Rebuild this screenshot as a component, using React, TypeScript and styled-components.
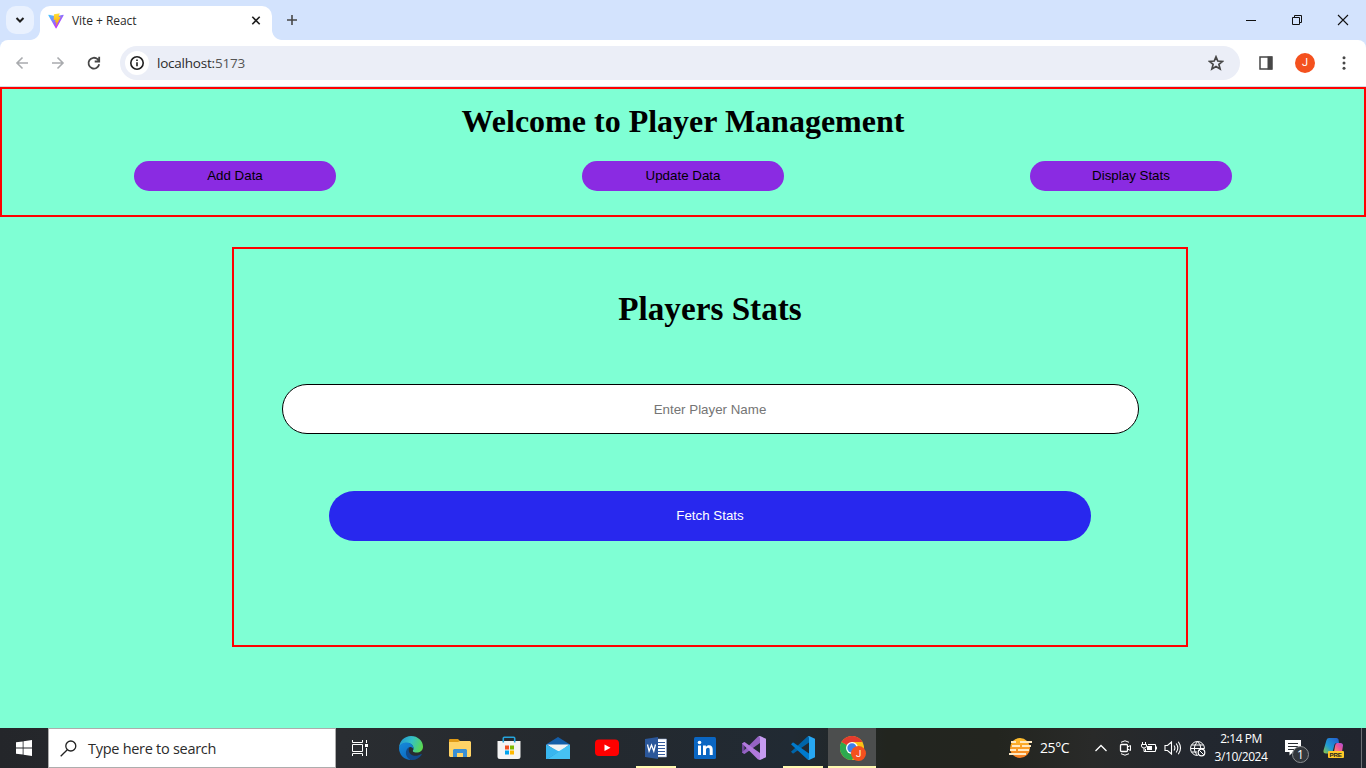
import React from "react";
import styled, { createGlobalStyle } from "styled-components";

const ui = `"Open Sans", "Noto Sans", sans-serif`;

const GlobalStyle = createGlobalStyle`
  *, *::before, *::after { box-sizing: border-box; }
  body { margin: 0; overflow: hidden; }
  svg { display: block; flex: none; }
`;

const Screen = styled.div`
  width: 1366px;
  height: 768px;
  display: flex;
  flex-direction: column;
  overflow: hidden;
  background: #7fffd4;
`;

/* ---------- browser ---------- */

const TabStrip = styled.header`
  height: 40px;
  display: flex;
  align-items: flex-start;
  padding: 6px 0 0 6px;
  background: #d3e3fd;
`;

const TabSearch = styled.button`
  width: 28px;
  height: 28px;
  padding: 6px;
  border: 0;
  border-radius: 10px;
  background: #e9f1fe;
`;

const Tab = styled.div`
  position: relative;
  width: 232px;
  height: 34px;
  margin-left: 6px;
  padding: 0 10px 5px 8px;
  display: flex;
  align-items: center;
  border-radius: 10px 10px 0 0;
  background: #fff;
  &::before, &::after {
    content: "";
    position: absolute;
    bottom: 0;
    width: 10px;
    height: 10px;
  }
  &::before { left: -10px; background: radial-gradient(circle at 0 0, transparent 9.5px, #fff 10.3px); }
  &::after { right: -10px; background: radial-gradient(circle at 100% 0, transparent 9.5px, #fff 10.3px); }
`;

const TabTitle = styled.span`
  flex: 1;
  margin-left: 8px;
  font: 12px/16px ${ui};
  letter-spacing: -0.05px;
  color: #2b2b2b;
`;

const NewTab = styled.div`
  margin: 6px 0 0 12px;
`;

const WindowControls = styled.div`
  display: flex;
  gap: 30px;
  margin: 6px 15px 0 auto;
`;

const ToolbarWrap = styled.div`
  background: #d3e3fd;
`;

const Toolbar = styled.nav`
  height: 47px;
  display: flex;
  align-items: center;
  padding: 0 14px;
  border-radius: 8px 8px 0 0;
  border-bottom: 1px solid #d5dbe3;
  background: #fff;
`;

const NavButtons = styled.div`
  display: flex;
  gap: 20px;
  width: 106px;
`;

const AddressBar = styled.div`
  flex: 1;
  height: 34px;
  display: flex;
  align-items: center;
  padding: 0 16px 0 5px;
  border-radius: 17px;
  background: #ebeef7;
`;

const SiteInfo = styled.span`
  width: 24px;
  height: 24px;
  padding: 4px;
  border-radius: 50%;
  background: #fff;
`;

const Url = styled.span`
  flex: 1;
  margin-left: 8px;
  font: 13.5px/20px ${ui};
  letter-spacing: -0.22px;
  color: #2b2b2b;
  span { color: #555; }
`;

const ToolbarActions = styled.div`
  display: flex;
  align-items: center;
  width: 112px;
  padding-left: 18px;
`;

const Avatar = styled.span`
  width: 20px;
  height: 20px;
  margin: 0 21px 0 21px;
  border-radius: 50%;
  background: #f4511e;
  color: #fff;
  text-align: center;
  font: 11px/20px Roboto, sans-serif;
`;

/* ---------- page ---------- */

const Page = styled.main`
  height: 641px;
  display: flex;
  flex-direction: column;
`;

const PageHeader = styled.section`
  height: 130px;
  border: 2px solid #f00;
  padding-top: 14px;
`;

const Heading = styled.h1<{ $size: number }>`
  margin: 0;
  text-align: center;
  color: #000;
  font: bold ${(p) => p.$size}px/37px "Liberation Serif", serif;
`;

const Menu = styled.div`
  display: flex;
  justify-content: space-between;
  margin: 21px 132px 0;
`;

const MenuButton = styled.button`
  width: 202px;
  height: 30px;
  padding: 0 0 2px;
  border: 0;
  border-radius: 15px;
  background: #8a2be2;
  color: #000;
  font: 13.333px "Liberation Sans", sans-serif;
`;

const StatsPanel = styled.section`
  width: 956px;
  height: 400px;
  margin: 30px 0 0 232px;
  padding-top: 41px;
  display: flex;
  flex-direction: column;
  align-items: center;
  border: 2px solid #f00;
`;

const PlayerInput = styled.input`
  width: 857px;
  height: 50px;
  margin-top: 57px;
  padding: 0;
  border: 1px solid #000;
  border-radius: 25px;
  background: #fff;
  text-align: center;
  font: 13.333px "Liberation Sans", sans-serif;
  &::placeholder { color: #757575; }
`;

const FetchButton = styled.button`
  width: 762px;
  height: 50px;
  margin-top: 57px;
  padding: 0 0 2px;
  border: 0;
  border-radius: 25px;
  background: #2828ee;
  color: #fff;
  font: 13.333px "Liberation Sans", sans-serif;
`;

/* ---------- taskbar ---------- */

const Taskbar = styled.footer`
  height: 40px;
  display: flex;
  color: #fff;
  background: linear-gradient(90deg, #24262a 0, #2a2d31 25%, #24292e 42%, #212a33 58%, #22251f 65%, #23251f 73%, #292a29 80%, #22272f 88%, #20252e 100%);
`;

const Slot = styled.div<{ $w: number }>`
  width: ${(p) => p.$w}px;
  height: 40px;
  flex: none;
  display: flex;
  align-items: center;
  justify-content: center;
`;

const SearchBox = styled.div`
  width: 288px;
  height: 40px;
  display: flex;
  align-items: center;
  padding-left: 11px;
  border: 1px solid #adadad;
  background: #fff;
`;

const SearchText = styled.span`
  margin-left: 11px;
  padding-top: 1px;
  font: 14.5px/20px ${ui};
  letter-spacing: -0.28px;
  color: #2b2b2b;
`;

const Apps = styled.div`
  display: flex;
  gap: 1px;
  margin-left: 3px;
`;

const AppSlot = styled.div<{ $state?: "open" | "active" }>`
  width: 48px;
  height: 40px;
  display: flex;
  align-items: center;
  justify-content: center;
  background: ${(p) => (p.$state === "active" ? "#4c4e4e" : "transparent")};
  position: relative;
  &::after {
    content: "";
    position: absolute;
    bottom: 0;
    height: 2px;
    left: ${(p) => (p.$state === "active" ? 0 : 4)}px;
    right: ${(p) => (p.$state === "active" ? 0 : 4)}px;
    background: ${(p) => (p.$state ? "#fdf9b0" : "transparent")};
  }
`;

const Tray = styled.div`
  display: flex;
  margin-left: auto;
`;

const Weather = styled.div`
  width: 81px;
  display: flex;
  align-items: center;
  gap: 7px;
  font: 14px/20px ${ui};
  letter-spacing: -0.4px;
`;

const Clock = styled.div`
  width: 64px;
  padding-top: 2px;
  text-align: center;
  white-space: nowrap;
  font: 12px/18px ${ui};
  letter-spacing: -0.45px;
`;

const ShowDesktop = styled.div`
  width: 5px;
  border-left: 1px solid #6d7075;
`;

const ViteLogo = () => (
  <svg width="16" height="16" viewBox="0 0 410 404">
    <defs>
      <linearGradient id="va" x1="6" y1="33" x2="235" y2="344" gradientUnits="userSpaceOnUse">
        <stop stopColor="#41D1FF" /><stop offset="1" stopColor="#BD34FE" />
      </linearGradient>
      <linearGradient id="vb" x1="194" y1="9" x2="236" y2="293" gradientUnits="userSpaceOnUse">
        <stop stopColor="#FFEA83" /><stop offset=".08" stopColor="#FFDD35" /><stop offset="1" stopColor="#FFA800" />
      </linearGradient>
    </defs>
    <path fill="url(#va)" d="M399.6 59.5 215.6 388.5c-3.8 6.8-13.5 6.8-17.4.1L10.6 59.6C6.4 52.2 12.7 43.2 21.1 44.7l184.2 32.9c1.2.2 2.4.2 3.6 0l180.3-32.9c8.4-1.5 14.7 7.4 10.4 14.8Z" />
    <path fill="url(#vb)" d="M293 1.6 156.8 28.3c-2.2.4-3.9 2.3-4 4.5l-8.4 141.5c-.2 3.3 2.9 5.9 6.1 5.2l37.9-8.8c3.5-.8 6.7 2.3 6 5.9l-11.3 55.1c-.8 3.7 2.7 6.9 6.4 5.8l23.4-7.1c3.6-1.1 7.1 2.1 6.4 5.8l-17.9 86.6c-1.1 5.4 6.1 8.4 9.1 3.7l2-3.1L323.4 102c1.9-3.7-1.3-7.9-5.4-7.1l-39 7.5c-3.7.7-6.8-2.7-5.7-6.3l25.4-88.2c1.1-3.6-2-7.1-5.7-6.3Z" />
  </svg>
);

const EdgeLogo = () => (
  <svg width="24" height="24" viewBox="0 0 24 24">
    <defs>
      <linearGradient id="ea" x1="2" y1="3" x2="24" y2="12" gradientUnits="userSpaceOnUse">
        <stop stopColor="#249bd0" /><stop offset=".45" stopColor="#35c1c5" /><stop offset="1" stopColor="#5edb45" />
      </linearGradient>
      <linearGradient id="eb" x1="1" y1="7" x2="12" y2="24" gradientUnits="userSpaceOnUse">
        <stop stopColor="#1689da" /><stop offset="1" stopColor="#0b67bd" />
      </linearGradient>
    </defs>
    <path fill="url(#ea)" d="M0 11.500C.5 5 5.500 0 12 0c7 0 12 5 12 10.600 0 4-3 6-6.300 6-3.500 0-4.700-1.300-3.200-3C15 10 12.500 7 8 7 4 7 1 9 0 11.500Z" />
    <path fill="url(#eb)" d="M0 12C.5 8.500 4 6.300 8 6.500c4.500.2 7 3.500 6.500 7-.6-1.800-2-2.700-4-2.300C7 12.500 6.500 20 12 24 5 24 0 18.500 0 12Z" />
    <path fill="#114a8b" d="M12 24C5.500 21.500 5.500 13.500 10.200 11.200c-1.500 4.300 1 8 5 8.500 2.700.3 5-.5 6.800-1.700.5-.3 1 .2.500.9C20.300 22.200 16.500 24.200 12 24Z" />
  </svg>
);

const ExplorerIcon = () => (
  <svg width="22" height="20" viewBox="0 0 22 20">
    <path fill="#df9a16" d="M1 1h8l2 2h10v4H0V2a1 1 0 0 1 1-1Z" />
    <path fill="#ffd366" d="M0 4h9l2-1h10l1 1v14l-1 1H1l-1-1Z" />
    <path fill="#3a8fd4" d="M5 11h12l1 1v7h-4v-4H8v4H4v-7Z" />
  </svg>
);

const StoreIcon = () => (
  <svg width="24" height="24" viewBox="0 0 24 24">
    <path fill="#f4f4f4" d="M.5 5h23v15.500a2.500 2.500 0 0 1-2.500 2.500H3a2.500 2.500 0 0 1-2.500-2.500Z" />
    <path fill="none" stroke="#25a4dc" strokeWidth="1.600" d="M6.300 6.500V2.300q0-1 1-1h9.400q1 0 1 1v4.200" />
    <path fill="#f25022" d="M8 9.500h4v4H8Z" /><path fill="#7fba00" d="M13 9.500h4v4h-4Z" />
    <path fill="#00a4ef" d="M8 14.500h4v4H8Z" /><path fill="#ffb900" d="M13 14.500h4v4h-4Z" />
  </svg>
);

const MailIcon = () => (
  <svg width="24" height="24" viewBox="0 0 24 24">
    <path fill="#145ea8" d="M12 1 24 8.500v3H0v-3Z" />
    <path fill="#f2f3f4" d="M1 8.500h22L13 17Z" />
    <path fill="#38b6ef" d="M0 8.500 13 15.500 24 23H0Z" />
    <path fill="#55cdf7" d="M24 8.500V23L0 23Z" />
    <path fill="#2da9e6" d="M13 15.200 24 23H0Z" />
    <path fill="#46c2f3" d="M24 8.500V23H2L14 15Z" />
  </svg>
);

const YouTubeIcon = () => (
  <svg width="24" height="18" viewBox="0 0 24 18">
    <rect y=".5" width="24" height="16.500" rx="4" fill="#f00" />
    <path fill="#fff" d="m9.500 5.500 6 3.300-6 3.300Z" />
  </svg>
);

const WordIcon = () => (
  <svg width="24" height="24" viewBox="0 0 24 24">
    <path fill="#fff" stroke="#8ca2cc" strokeWidth=".6" d="M12 3h10.500v18H12Z" />
    <path stroke="#365b9d" strokeWidth="1" d="M14 6.500h7M14 9.500h7M14 12.500h7M14 15.500h7M14 18.500h7" />
    <path fill="#2b579a" d="M1 3 14 1v22L1 21Z" />
    <path fill="none" stroke="#fff" strokeWidth="1.300" d="m3.500 8.500 1.600 6.600L7.500 9l2.300 6.100 1.700-6.600" />
  </svg>
);

const LinkedInIcon = () => (
  <svg width="22" height="22" viewBox="0 0 22 22">
    <rect width="22" height="22" rx="1.500" fill="#0a66c2" />
    <path fill="#fff" d="M4 8.500h3V18H4ZM9 8.500h2.900V10c.7-1.100 1.700-1.700 3.100-1.700 2.700 0 3.700 1.700 3.700 4.200V18h-3v-5c0-1.400-.4-2.200-1.700-2.200S12 11.800 12 13v5H9Z" />
    <circle cx="5.500" cy="5.500" r="1.800" fill="#fff" />
  </svg>
);

const VisualStudioIcon = () => (
  <svg width="24" height="24" viewBox="0 0 24 24">
    <path fill="#70479a" d="M0 7.500 2.500 6v12L0 16.500Z" />
    <path fill="#9563c4" d="m0 16.500 16-16L18 1v6L2.500 18Z" />
    <path fill="#b179dc" d="M0 7.500 2.500 6 18 17v6l-2 .5Z" />
    <path fill="#c69cf0" d="m18 0 6 2.800v18.400L18 24l-2-.5q2 0 2-1.500V2q0-1.500-2-1.500Z" />
  </svg>
);

const VSCodeIcon = () => (
  <svg width="24" height="24" viewBox="0 0 24 24">
    <path fill="#0065a9" d="m0 15.700 1.500 1.600q.5.500 1.200 0L18 6.500V1l-1.500-.5L0 15.700Z" />
    <path fill="#007acc" d="m0 8.300 1.500-1.600q.5-.5 1.200 0L18 17.500V23l-1.500.5Z" />
    <path fill="#27a7f2" d="m18 0 6 2.700v18.600L18 24q-.8 0-1.500-.5 1.500.3 1.500-1.500V2q0-1.800-1.500-1.500Z" />
  </svg>
);

const ChromeIcon = () => (
  <svg width="24" height="24" viewBox="0 0 24 24">
    <circle cx="12" cy="12" r="12" fill="#fbc116" />
    <path fill="#2da94f" d="M12 12 1.600 6a12 12 0 0 0 10.400 18l5-9Z" />
    <path fill="#e33b2e" d="M12 12 1.600 6A12 12 0 0 1 22.400 6H12Z" />
    <circle cx="12" cy="12" r="6" fill="#fff" />
    <circle cx="12" cy="12" r="4.700" fill="#3e7eea" />
  </svg>
);

const ProfileBadge = styled.span`
  position: absolute;
  left: 23px;
  top: 18px;
  width: 15px;
  height: 15px;
  border-radius: 50%;
  background: #f4511e;
  text-align: center;
  font: 9.5px/15px Roboto, sans-serif;
`;

const NotificationCount = styled.span`
  position: absolute;
  left: 19px;
  top: 18px;
  width: 17px;
  height: 17px;
  border: 1px solid #8b8e91;
  border-radius: 50%;
  background: #33373c;
  text-align: center;
  font: 12px/15px ${ui};
`;

const Notifications = styled(Slot)`
  position: relative;
`;

const WeatherIcon = () => (
  <svg width="25" height="22" viewBox="0 0 25 22">
    <defs>
      <linearGradient id="sun" x1="0" y1="0" x2="0" y2="1">
        <stop stopColor="#ffc02e" /><stop offset="1" stopColor="#f47a20" />
      </linearGradient>
    </defs>
    <circle cx="12" cy="11" r="10" fill="url(#sun)" />
    <path stroke="#ffe9c2" strokeWidth="1.800" d="M12 5h12M3 5h5M4 9h8M14 9h9M2 13h6M10 13h11M1 17h17" />
  </svg>
);

const CopilotIcon = () => (
  <svg width="22" height="22" viewBox="0 0 22 22">
    <defs>
      <linearGradient id="cp" x1="0" y1="1" x2="1" y2="0">
        <stop stopColor="#91c83d" /><stop offset=".4" stopColor="#209bd5" /><stop offset="1" stopColor="#2459cf" />
      </linearGradient>
      <linearGradient id="cq" x1="0" y1="1" x2="1" y2="0">
        <stop stopColor="#ff9562" /><stop offset=".5" stopColor="#ef5795" /><stop offset="1" stopColor="#a94cda" />
      </linearGradient>
    </defs>
    <path fill="url(#cp)" d="M6 1h7.500q1.500 0 2 1.500L16 6h-2.500q-1.500 0-2 1.500L9.500 15q-.5 1.500-2 1.500H3q-3-.2-2.500-3L3.500 3Q4 1 6 1Z" />
    <path fill="url(#cq)" d="M14 6h3.500Q20 6 20 8.500L19 15H11l1-6Q12.500 6 14 6Z" />
    <rect x="5" y="14" width="16" height="7" rx="1" fill="#ffc928" />
    <text x="6.500" y="19.800" fontFamily="Liberation Sans" fontWeight="700" fontSize="6.200" textLength="12.500" fill="#222">PRE</text>
  </svg>
);

export default function App() {
  return (
    <Screen>
      <GlobalStyle />
      <TabStrip>
        <TabSearch aria-label="Search tabs">
          <svg width="16" height="16" fill="none" stroke="#1f1f1f" strokeWidth="2"><path d="m4.500 6 3.500 3.500L11.500 6" /></svg>
        </TabSearch>
        <Tab>
          <ViteLogo />
          <TabTitle>Vite + React</TabTitle>
          <svg width="12" height="12" stroke="#1f1f1f" strokeWidth="1.600"><path d="m2.300 1.800 7.400 7.400m0-7.400L2.300 9.200" /></svg>
        </Tab>
        <NewTab>
          <svg width="16" height="16" stroke="#474747" strokeWidth="1.600"><path d="M8 3v10M3 8h10" /></svg>
        </NewTab>
        <WindowControls>
          <svg width="16" height="16" stroke="#111"><path d="M3 8.500h10" /></svg>
          <svg width="16" height="16" fill="none" stroke="#111"><path d="M3.500 5.500h7v7h-7ZM5.500 5V3.500h7v7H11" /></svg>
          <svg width="16" height="16" stroke="#111" strokeWidth="1.100"><path d="m3 3 10 10m0-10L3 13" /></svg>
        </WindowControls>
      </TabStrip>

      <ToolbarWrap>
        <Toolbar>
          <NavButtons>
            <svg width="16" height="16" fill="none" stroke="#a9abae" strokeWidth="1.600"><path d="M14 8H3m5.500-5.500L3 8l5.500 5.500" /></svg>
            <svg width="16" height="16" fill="none" stroke="#a9abae" strokeWidth="1.600"><path d="M2 8h11M7.500 2.500 13 8l-5.500 5.500" /></svg>
            <svg width="16" height="16" fill="none" stroke="#474747" strokeWidth="1.800"><path d="M13.200 9.300a5.400 5.400 0 1 1-1.600-5.100L13 5.800M13.200 1.800v4.700H8.700" /></svg>
          </NavButtons>
          <AddressBar>
            <SiteInfo>
              <svg width="16" height="16" fill="none" stroke="#1f1f1f" strokeWidth="1.600"><circle cx="8" cy="8" r="6.200" /><path d="M8 7.200v4M8 4.500v1.500" /></svg>
            </SiteInfo>
            <Url>localhost:<span>5173</span></Url>
            <svg width="16" height="16" fill="none" stroke="#474747" strokeWidth="1.700"><path d="m8 1.800 1.800 4.200 4.700.4-3.600 3 1.200 4.600L8 11.500 3.900 14l1.200-4.600-3.600-3L6.200 6Z" /></svg>
          </AddressBar>
          <ToolbarActions>
            <svg width="16" height="16"><path fill="none" stroke="#474747" strokeWidth="1.500" d="M2 2h12v12H2Z" /><path fill="#474747" d="M9.500 1.500H14v13H9.500Z" /></svg>
            <Avatar>J</Avatar>
            <svg width="16" height="16" fill="#474747"><circle cx="8" cy="2.800" r="1.500" /><circle cx="8" cy="8" r="1.500" /><circle cx="8" cy="13.200" r="1.500" /></svg>
          </ToolbarActions>
        </Toolbar>
      </ToolbarWrap>

      <Page>
        <PageHeader>
          <Heading $size={32}>Welcome to Player Management</Heading>
          <Menu>
            <MenuButton>Add Data</MenuButton>
            <MenuButton>Update Data</MenuButton>
            <MenuButton>Display Stats</MenuButton>
          </Menu>
        </PageHeader>
        <StatsPanel>
          <Heading $size={33.2}>Players Stats</Heading>
          <PlayerInput placeholder="Enter Player Name" />
          <FetchButton>Fetch Stats</FetchButton>
        </StatsPanel>
      </Page>

      <Taskbar>
        <Slot $w={48}>
          <svg width="16" height="16" fill="#fff"><path d="M0 2.300 6.700 1.400v6.200H0ZM7.500 1.200 16 0v7.600H7.500ZM0 8.400h6.700v6.200L0 13.700ZM7.500 8.400H16V16l-8.500-1.200Z" /></svg>
        </Slot>
        <SearchBox>
          <svg width="17" height="17" fill="none" stroke="#222" strokeWidth="1.300"><circle cx="10.800" cy="6" r="5" /><path d="M7.300 9.700.7 16.300" /></svg>
          <SearchText>Type here to search</SearchText>
        </SearchBox>
        <Slot $w={48}>
          <svg width="18" height="16" fill="none" stroke="#fff"><path d="M1.500 0v2.500h10V0M1.500 4.500h10v7h-10ZM1.500 16v-2.500h10V16M15.500 0v3M15.500 8v8" /><path fill="#fff" stroke="none" d="M14 4h3v3h-3Z" /></svg>
        </Slot>
        <Apps>
          <AppSlot><EdgeLogo /></AppSlot>
          <AppSlot><ExplorerIcon /></AppSlot>
          <AppSlot><StoreIcon /></AppSlot>
          <AppSlot><MailIcon /></AppSlot>
          <AppSlot><YouTubeIcon /></AppSlot>
          <AppSlot $state="open"><WordIcon /></AppSlot>
          <AppSlot><LinkedInIcon /></AppSlot>
          <AppSlot><VisualStudioIcon /></AppSlot>
          <AppSlot $state="open"><VSCodeIcon /></AppSlot>
          <AppSlot $state="active"><ChromeIcon /><ProfileBadge>J</ProfileBadge></AppSlot>
        </Apps>
        <Tray>
          <Weather><WeatherIcon /><span>25°C</span></Weather>
          <Slot $w={24}><svg width="14" height="8" fill="none" stroke="#fff" strokeWidth="1.300"><path d="m1.500 7 5.500-5.500L12.500 7" /></svg></Slot>
          <Slot $w={24}>
            <svg width="14" height="16" fill="none" stroke="#fff"><path d="M3 2.300Q7-.7 11 2.300M3 13.700q4 3 8 0" /><rect x="2.500" y="4.500" width="7" height="7" rx="1" strokeWidth="1.300" /><path d="M9.500 7 12.500 5.500v5L9.500 9" /></svg>
          </Slot>
          <Slot $w={24}>
            <svg width="16" height="14" fill="none" stroke="#fff"><path d="M7 3.500h7.500v7H4.500V8M15.500 5.500v3M1.500 1v2M4.500 1v2M.5 3.500h5V5Q5.500 7 3 7 .5 7 .5 5ZM3 7v3.500h2" /><path fill="#fff" stroke="none" d="M6 5h5v4H6Z" /></svg>
          </Slot>
          <Slot $w={24}>
            <svg width="18" height="16" fill="none" stroke="#fff" strokeWidth="1.100"><path d="M1 5.500h2.500L7.500 2v12l-4-3.500H1ZM10 5.500q1.800 2.500 0 5M12.200 3.500q3.200 4.500 0 9M14.300 1.800q4.400 6.200 0 12.400" /></svg>
          </Slot>
          <Slot $w={24}>
            <svg width="17" height="17" fill="none" stroke="#fff"><path d="M8.500 15.500a7 7 0 1 1 7-7M1.500 8.500h14M2.500 5h12M2.500 12H8M8.500 1.500q-6.500 7 0 14M8.500 1.500q3.500 3 3.300 7" /><circle cx="12.500" cy="12.500" r="3.300" strokeWidth="1.200" /><path d="m10.300 10.300 4.400 4.400" /></svg>
          </Slot>
          <Clock>2:14 PM<br />3/10/2024</Clock>
          <Notifications $w={48}>
            <svg width="24" height="18" viewBox="0 0 24 18"><path fill="#fff" d="M0 1h16v12H8l-3.500 3.500V13H0Z" /><path stroke="#292d32" d="M3 4.500h10M3 7.500h10M3 10.500h6" /></svg>
            <NotificationCount>1</NotificationCount>
          </Notifications>
          <Slot $w={25}><CopilotIcon /></Slot>
          <Slot $w={15} />
          <ShowDesktop />
        </Tray>
      </Taskbar>
    </Screen>
  );
}
